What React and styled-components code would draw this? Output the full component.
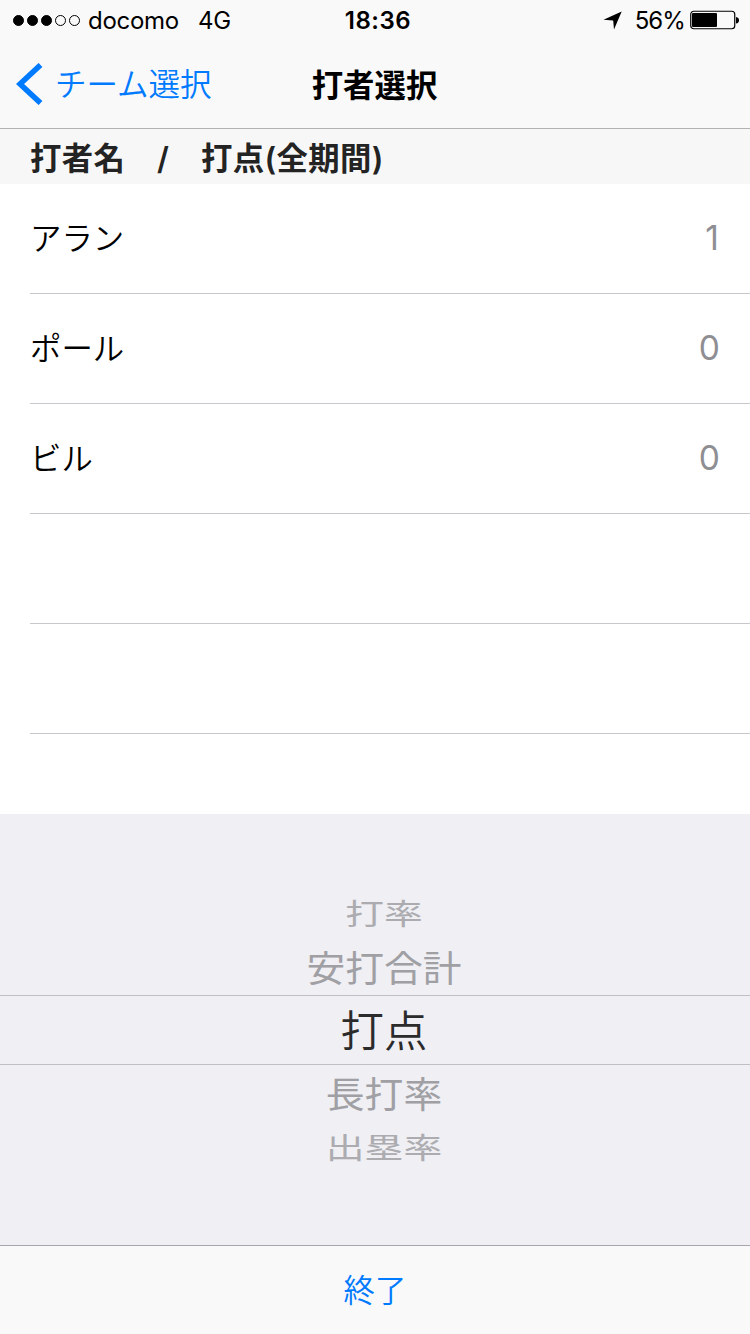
import styled, { createGlobalStyle } from "styled-components";

const GlobalStyle = createGlobalStyle`
  * {
    box-sizing: border-box;
  }

  body {
    margin: 0;
    background: #fff;
    font-family: Inter, "Noto Sans CJK JP", sans-serif;
    color: #000;
  }
`;

const Screen = styled.div`
  display: flex;
  flex-direction: column;
  width: 750px;
  height: 1334px;
  background: #fff;
  overflow: hidden;
  white-space: nowrap;
`;

const StatusBar = styled.div`
  display: grid;
  grid-template-columns: 1fr auto 1fr;
  align-items: center;
  height: 40px;
  padding: 0 11px 0 13px;
  background: #f9f9f9;
  font-size: 24px;
  line-height: 38px;
`;

const Carrier = styled.div`
  display: flex;
  align-items: center;
`;

const Dots = styled.div`
  display: flex;
  gap: 3px;
  margin-right: 8px;
`;

const Dot = styled.span`
  width: 11px;
  height: 11px;
  border: 1px solid #000;
  border-radius: 50%;
  background: ${(props) => (props.$filled ? "#000" : "transparent")};
`;

const CarrierName = styled.span`
  width: 110px;
  padding-top: 2px;
  letter-spacing: -0.3px;
`;

const Network = styled.span`
  padding-top: 2px;
  letter-spacing: -0.3px;
`;

const Clock = styled.div`
  padding: 2px 0 0 4px;
  font-weight: 600;
  letter-spacing: 0.5px;
`;

const Power = styled.div`
  display: flex;
  align-items: center;
  justify-content: flex-end;
`;

const Percent = styled.span`
  margin: 0 5px 0 13px;
  padding-top: 2px;
  letter-spacing: -0.9px;
`;

const NavBar = styled.header`
  display: grid;
  grid-template-columns: 1fr auto 1fr;
  align-items: center;
  height: 89px;
  padding: 0 17px 0 16px;
  border-bottom: 1px solid #b2b2b2;
  background: #f9f9f9;
`;

const BackButton = styled.div`
  display: flex;
  align-items: center;
  gap: 11px;
  color: #007aff;
`;

const BackText = styled.span`
  padding-top: 2px;
  font-size: 31.5px;
  font-weight: 350;
  line-height: 84px;
`;

const Title = styled.h1`
  margin: 0;
  padding-top: 4px;
  font-size: 31.4px;
  font-weight: 600;
  line-height: 84px;
`;

const SectionHeader = styled.div`
  height: 55px;
  padding-left: 30px;
  background: #f7f7f7;
  color: #232323;
  font-size: 31.4px;
  font-weight: 600;
  letter-spacing: 0.35px;
  line-height: 60px;
`;

const List = styled.div`
  display: flex;
  flex-direction: column;
  height: 630px;
  padding-left: 30px;
`;

const Row = styled.div`
  display: flex;
  flex-shrink: 0;
  align-items: center;
  justify-content: space-between;
  height: 110px;
  padding-right: 30px;
  border-bottom: 1px solid #c8c7cc;
`;

const PlayerName = styled.span`
  padding-bottom: 5px;
  font-size: 31.4px;
  font-weight: 350;
`;

const Score = styled.span`
  padding-bottom: 1px;
  padding-right: ${(props) => (props.$narrow ? 1 : 0)}px;
  color: #8e8e93;
  font-size: 33.5px;
  font-weight: 380;
`;

const Picker = styled.div`
  display: flex;
  flex-direction: column;
  height: 431px;
  padding-top: 72px;
  background: #efeff4;
`;

const Option = styled.div`
  display: flex;
  align-items: center;
  justify-content: center;
  height: ${(props) => props.$height}px;
  padding-left: 18px;
  color: ${(props) => props.$color};
  font-size: 38.8px;
  font-weight: 400;
  line-height: 1;
`;

const SelectedOption = styled(Option)`
  border-top: 1px solid #bfbfc4;
  border-bottom: 1px solid #bfbfc4;
  font-size: 43.4px;
  font-weight: 350;
`;

const OptionText = styled.span`
  padding-top: ${(props) => props.$drop}px;
  transform: scaleY(${(props) => props.$squash || 1});
`;

const Toolbar = styled.footer`
  display: flex;
  align-items: center;
  justify-content: center;
  height: 89px;
  padding-bottom: 4px;
  border-top: 1px solid #a7a7aa;
  background: #f9f9f9;
  color: #007aff;
  font-size: 31.4px;
  font-weight: 350;
`;

const LocationIcon = () => (
  <svg width="19" height="19" viewBox="0 0 19 19">
    <path d="M18.7 0.5L11 18.5L10.2 9.4L0.5 8.8Z" fill="#000" />
  </svg>
);

const BatteryIcon = () => (
  <svg width="49" height="20" viewBox="0 0 49 20">
    <rect
      x="0.75"
      y="1.25"
      width="44"
      height="17.5"
      rx="3"
      fill="none"
      stroke="#000"
      strokeWidth="1.2"
    />
    <rect x="2" y="3" width="25" height="14" rx="1" fill="#000" />
    <path d="M46 7Q49 7.5 49 10.3T46 13.6Z" fill="#000" />
  </svg>
);

const BackIcon = () => (
  <svg width="28" height="42" viewBox="0 0 28 42">
    <path
      d="M24.5 2L4 21L24.5 40"
      fill="none"
      stroke="#007aff"
      strokeWidth="5.6"
    />
  </svg>
);

const players = [
  { name: "アラン", score: 1 },
  { name: "ポール", score: 0 },
  { name: "ビル", score: 0 },
  {},
  {},
];

const App = () => {
  return (
    <>
      <GlobalStyle />
      <Screen>
        <StatusBar>
          <Carrier>
            <Dots>
              <Dot $filled />
              <Dot $filled />
              <Dot $filled />
              <Dot />
              <Dot />
            </Dots>
            <CarrierName>docomo</CarrierName>
            <Network>4G</Network>
          </Carrier>
          <Clock>18:36</Clock>
          <Power>
            <LocationIcon />
            <Percent>56%</Percent>
            <BatteryIcon />
          </Power>
        </StatusBar>
        <NavBar>
          <BackButton>
            <BackIcon />
            <BackText>チーム選択</BackText>
          </BackButton>
          <Title>打者選択</Title>
        </NavBar>
        <SectionHeader>打者名　/　打点(全期間)</SectionHeader>
        <List>
          {players.map((player, index) => (
            <Row key={index}>
              <PlayerName>{player.name}</PlayerName>
              <Score $narrow={player.score === 1}>{player.score}</Score>
            </Row>
          ))}
        </List>
        <Picker>
          <Option $height={55} $color="#acacb0">
            <OptionText $drop={3} $squash={0.75}>
              打率
            </OptionText>
          </Option>
          <Option $height={54} $color="#a0a0a4">
            <OptionText $drop={3} $squash={0.93}>
              安打合計
            </OptionText>
          </Option>
          <SelectedOption $height={70} $color="#2b2b2b">
            <OptionText $drop={4}>打点</OptionText>
          </SelectedOption>
          <Option $height={55} $color="#a0a0a4">
            <OptionText $drop={5} $squash={0.93}>
              長打率
            </OptionText>
          </Option>
          <Option $height={55} $color="#acacb0">
            <OptionText $drop={3} $squash={0.75}>
              出塁率
            </OptionText>
          </Option>
        </Picker>
        <Toolbar>終了</Toolbar>
      </Screen>
    </>
  );
};

export default App;
